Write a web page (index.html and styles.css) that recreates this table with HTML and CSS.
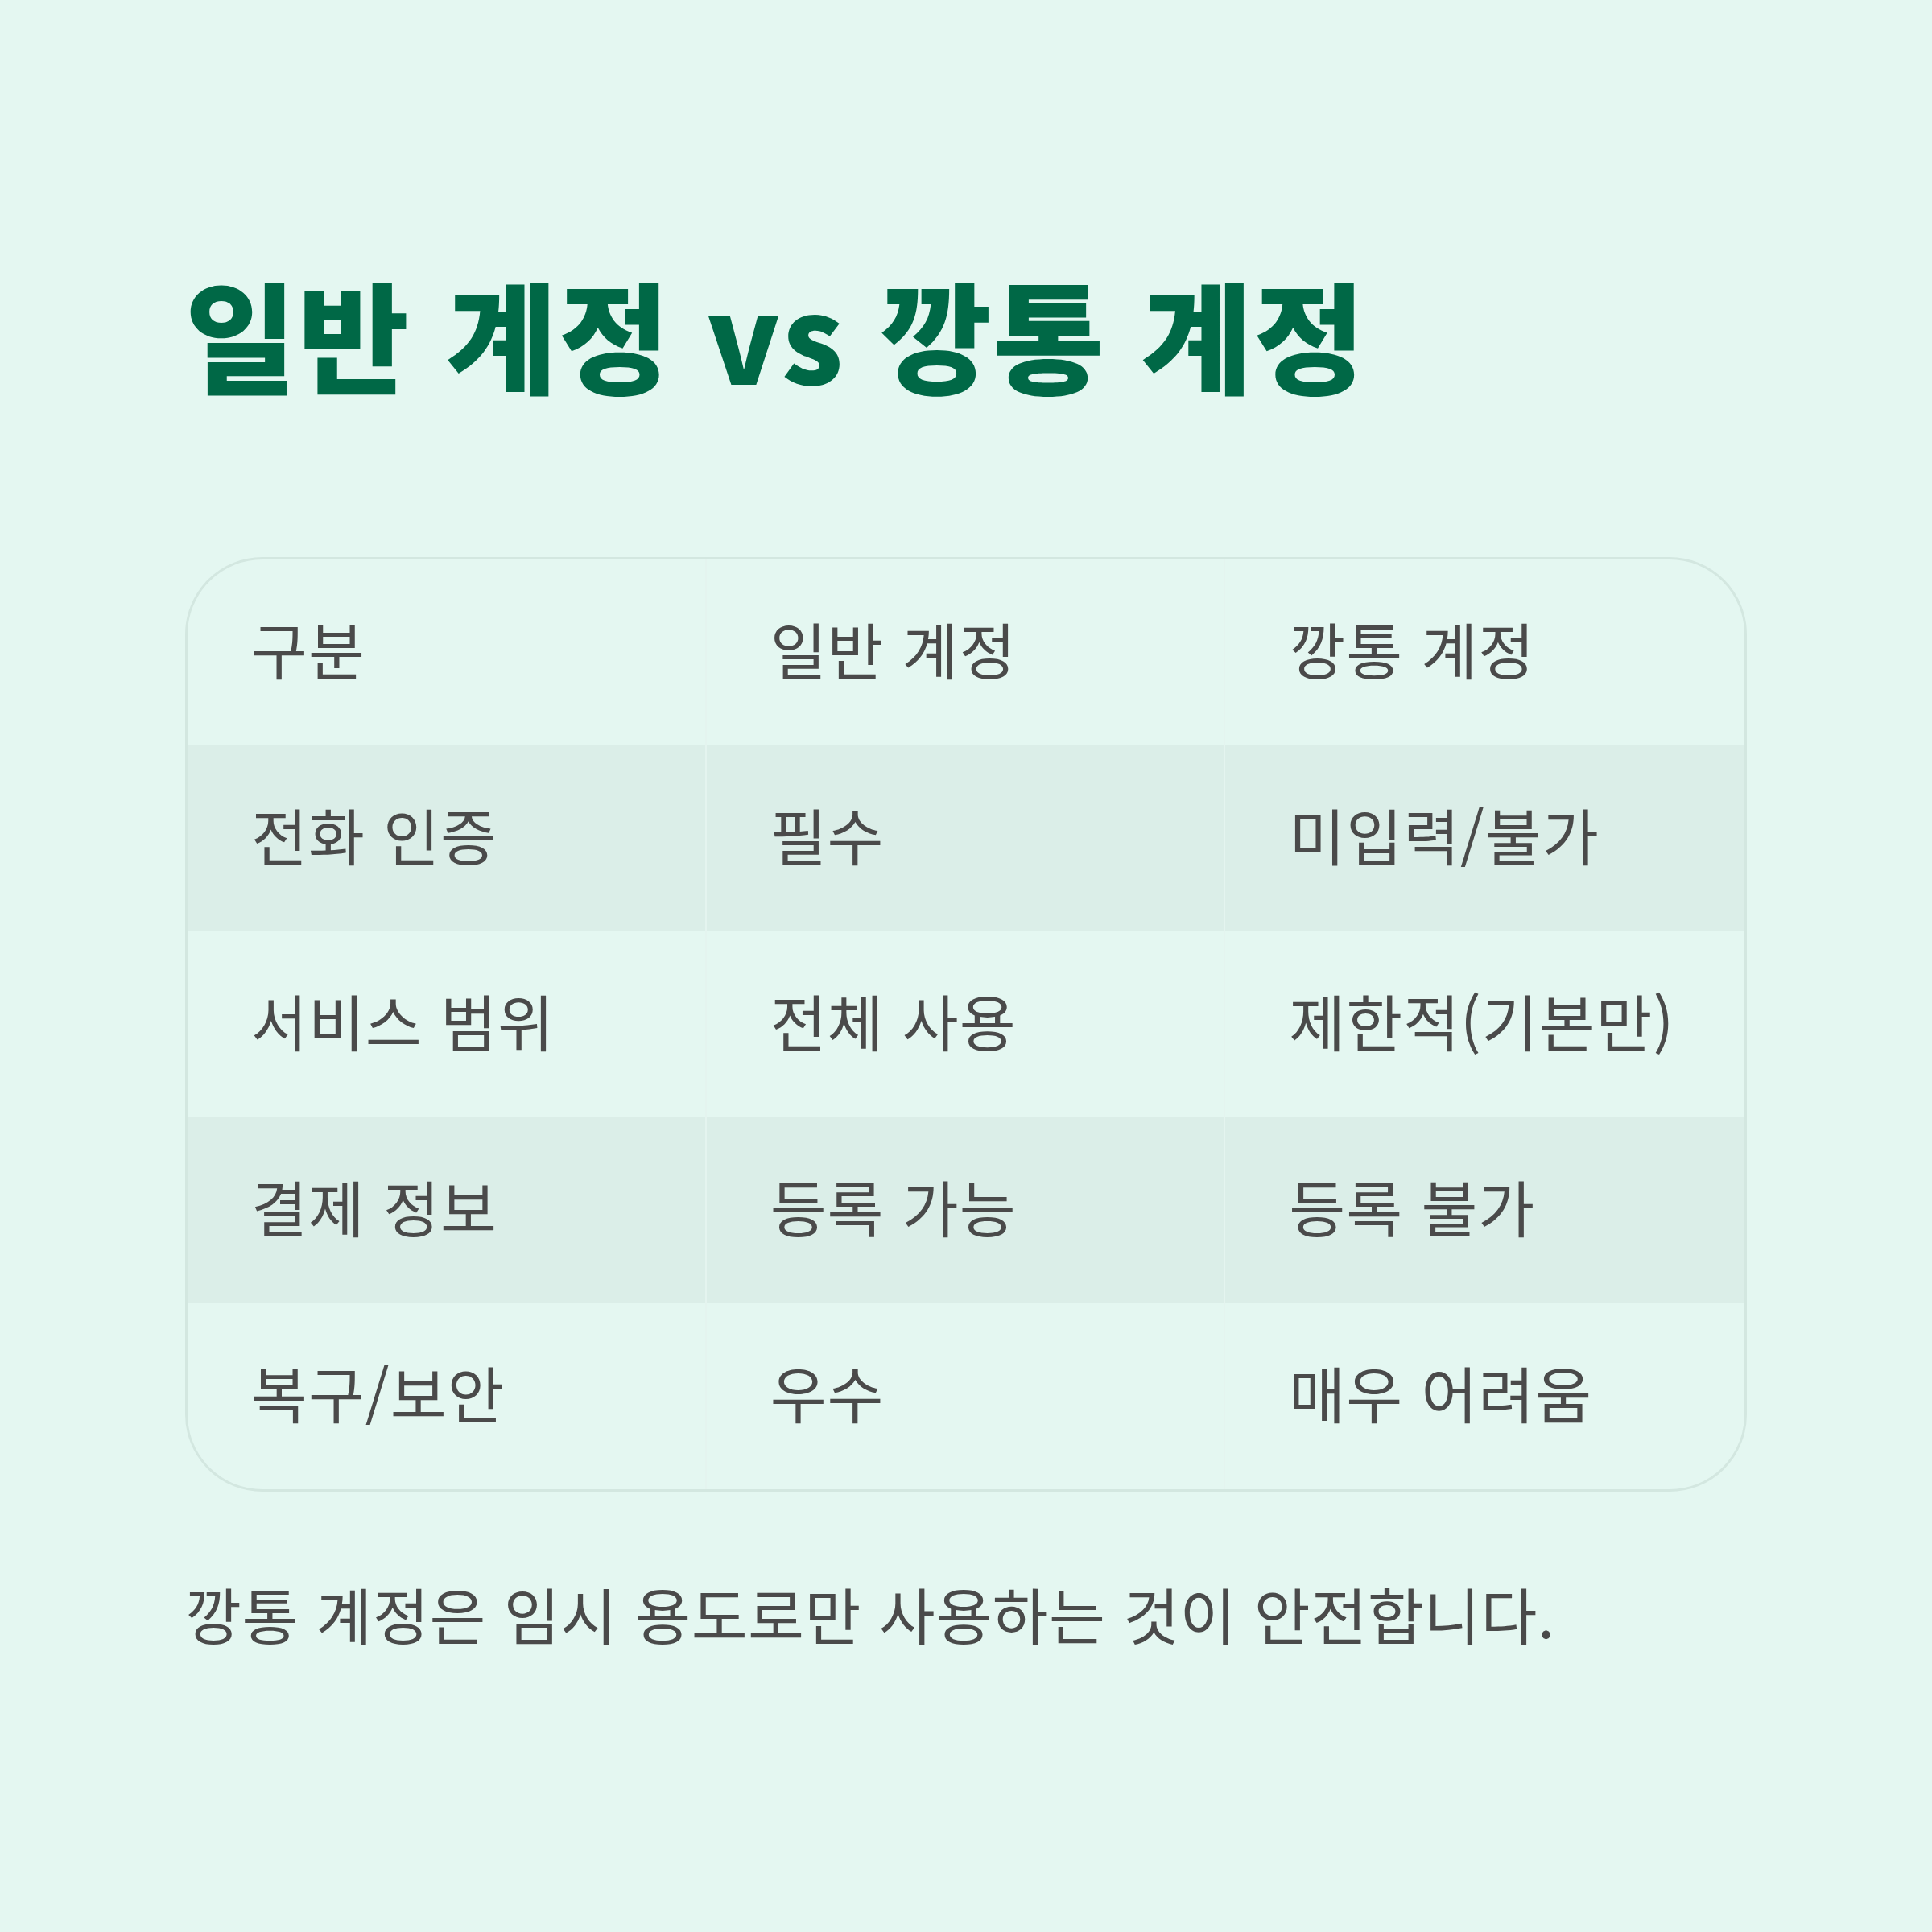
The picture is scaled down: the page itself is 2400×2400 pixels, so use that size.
FILE: index.html
```html
<!DOCTYPE html>
<html lang="ko">
<head>
<meta charset="utf-8">
<link rel="stylesheet" href="styles.css">
</head>
<body>
<main class="page">
  <h1 class="title">일반 계정 vs 깡통 계정</h1>
  <div class="table">
    <div class="cell head">구분</div>
    <div class="cell head">일반 계정</div>
    <div class="cell head">깡통 계정</div>

    <div class="cell alt">전화 인증</div>
    <div class="cell alt">필수</div>
    <div class="cell alt">미입력/불가</div>

    <div class="cell">서비스 범위</div>
    <div class="cell">전체 사용</div>
    <div class="cell">제한적(기본만)</div>

    <div class="cell alt">결제 정보</div>
    <div class="cell alt">등록 가능</div>
    <div class="cell alt">등록 불가</div>

    <div class="cell">복구/보안</div>
    <div class="cell">우수</div>
    <div class="cell">매우 어려움</div>
  </div>
  <p class="note">깡통 계정은 임시 용도로만 사용하는 것이 안전합니다.</p>
</main>
</body>
</html>
```

FILE: styles.css
```css
html, body {
  margin: 0;
  padding: 0;
  background: #e4f7f1;
}

.page {
  width: 2400px;
  height: 2400px;
  box-sizing: border-box;
  padding: 318px 230px 0 230px;
  font-family: "Noto Sans CJK KR", "Noto Sans", sans-serif;
  color: #4a4a4a;
}

.title {
  margin: 0;
  font-size: 150px;
  line-height: 190px;
  font-weight: 900;
  color: #006846;
  letter-spacing: 2px;
}

.table {
  margin-top: 184px;
  width: 1940px;
  box-sizing: border-box;
  border: 3px solid #d3e7e0;
  border-radius: 96px;
  overflow: hidden;
  display: grid;
  grid-template-columns: 1fr 1fr 1fr;
  grid-auto-rows: 231px;
}

.cell {
  display: flex;
  align-items: center;
  padding-left: 79px;
  padding-bottom: 12px;
  box-sizing: border-box;
  font-size: 76px;
  letter-spacing: 1px;
  border-right: 2px solid #e4f4ef;
}

.cell:nth-child(3n) {
  border-right: none;
}

.alt {
  background: #dbeee8;
}

.note {
  margin: 101px 0 0 0;
  font-size: 76px;
  line-height: 100px;
  letter-spacing: 0.5px;
}
```
